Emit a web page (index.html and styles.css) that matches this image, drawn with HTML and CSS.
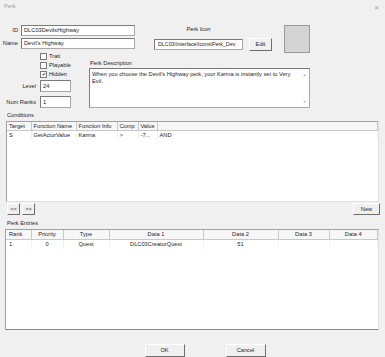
FILE: index.html
```html
<!DOCTYPE html>
<html>
<head>
	<title>Perk</title>
	<link rel="stylesheet" href="styles.css">
</head>
<body>
	<div class="dialog">
		<div class="titlebar">
			<span>Perk</span>
			<span class="close">&#x2715;</span>
		</div>

		<div class="top-row">
			<div class="fields">
				<div class="field">
					<label>ID</label>
					<div class="input wide">DLC03DevilsHighway</div>
				</div>
				<div class="field">
					<label>Name</label>
					<div class="input wide">Devil's Highway</div>
				</div>
			</div>
			<div class="icon-group">
				<div class="icon-label">Perk Icon</div>
				<div class="icon-line">
					<div class="input path">DLC03\Interface\Icons\Perk_Dev</div>
					<div class="btn edit">Edit</div>
				</div>
			</div>
			<div class="icon-preview"></div>
		</div>

		<div class="mid-row">
			<div class="flags">
				<div class="check"><span class="box"></span>Trait</div>
				<div class="check"><span class="box"></span>Playable</div>
				<div class="check"><span class="box checked">&#x2714;</span>Hidden</div>
				<div class="num level">
					<label>Level</label>
					<div class="input short">24</div>
				</div>
				<div class="num ranks">
					<label>Num Ranks</label>
					<div class="input short">1</div>
				</div>
			</div>
			<div class="description">
				<div class="caption">Perk Description</div>
				<div class="textarea">
					<div class="text">When you choose the Devil's Highway perk, your Karma is instantly set to Very<br>Evil.</div>
					<div class="vscroll"><span>&#x25B2;</span><span>&#x25BC;</span></div>
				</div>
			</div>
		</div>

		<div class="section-label conditions-label">Conditions</div>
		<div class="grid conditions">
			<table>
				<colgroup>
					<col style="width:24px">
					<col style="width:45px">
					<col style="width:41px">
					<col style="width:21px">
					<col style="width:19px">
					<col>
				</colgroup>
				<thead>
					<tr><th>Target</th><th>Function Name</th><th>Function Info</th><th>Comp</th><th>Value</th><th></th></tr>
				</thead>
				<tbody>
					<tr><td>S</td><td>GetActorValue</td><td>Karma</td><td>&gt;</td><td>-7...</td><td>AND</td></tr>
				</tbody>
			</table>
		</div>

		<div class="button-row">
			<div class="btn small">&lt;&lt;</div>
			<div class="btn small">&gt;&gt;</div>
			<div class="btn new">New</div>
		</div>

		<div class="section-label entries-label">Perk Entries</div>
		<div class="grid entries">
			<table>
				<colgroup>
					<col style="width:25px">
					<col style="width:32px">
					<col style="width:46px">
					<col style="width:94px">
					<col style="width:75px">
					<col style="width:51px">
					<col>
				</colgroup>
				<thead>
					<tr><th class="left">Rank</th><th>Priority</th><th>Type</th><th>Data 1</th><th>Data 2</th><th>Data 3</th><th>Data 4</th></tr>
				</thead>
				<tbody>
					<tr><td class="left">1</td><td>0</td><td>Quest</td><td>DLC03CreatorQuest</td><td>51</td><td></td><td></td></tr>
				</tbody>
			</table>
		</div>

		<div class="footer">
			<div class="btn action">OK</div>
			<div class="btn action">Cancel</div>
		</div>
	</div>
</body>
</html>
```

FILE: styles.css
```css
body {
	margin: 0;
	background-color: #f0f0f0;
}
.dialog {
	width: 385px;
	height: 357px;
	overflow: hidden;
	background-color: #f0f0f0;
	color: #262626;
	font-family: "Liberation Sans", Arial, sans-serif;
	font-size: 5.7px;
	line-height: 7px;
}
.titlebar {
	display: flex;
	justify-content: space-between;
	height: 20px;
	box-sizing: border-box;
	padding: 3px 6px 0 4px;
	color: #a0a0a0;
}
.close {
	font-size: 6px;
	padding-top: 2px;
}
.input {
	box-sizing: border-box;
	background-color: #fff;
	border: 1px solid #a8a8a8;
	border-top-color: #7a7a7a;
	border-left-color: #7a7a7a;
	padding: 1px 2px;
	white-space: nowrap;
	overflow: hidden;
}
.btn {
	box-sizing: border-box;
	display: flex;
	align-items: center;
	justify-content: center;
	background-color: #f0f0f0;
	border: 1px solid;
	border-color: #fff #6d6d6d #6d6d6d #fff;
}

/* top row: id, name, icon */
.top-row {
	display: flex;
	margin-top: 5px;
	height: 28px;
}
.fields {
	display: flex;
	flex-direction: column;
	gap: 2px;
	width: 135px;
}
.field {
	display: flex;
	align-items: center;
	height: 11px;
}
.field label {
	width: 18px;
	padding-right: 3px;
	text-align: right;
}
.input.wide {
	width: 114px;
	height: 11px;
}
.icon-group {
	margin-left: 19px;
}
.icon-label {
	width: 89px;
	height: 13px;
	padding-top: 1px;
	box-sizing: border-box;
	text-align: center;
}
.icon-line {
	display: flex;
	align-items: center;
}
.input.path {
	width: 89px;
	height: 11px;
	padding: 1px 1px 1px 3px;
	font-size: 5.4px;
	letter-spacing: -0.05px;
}
.btn.edit {
	width: 23px;
	height: 13px;
	margin-left: 6px;
}
.icon-preview {
	width: 26px;
	height: 28px;
	margin-left: 12px;
	box-sizing: border-box;
	background-color: #d4d4d4;
	border: 1px solid #9a9a9a;
}

/* flags and description */
.mid-row {
	display: flex;
	margin-top: -1px;
}
.flags {
	width: 89px;
}
.check {
	display: flex;
	align-items: center;
	height: 9px;
	padding-left: 40px;
}
.box {
	box-sizing: border-box;
	width: 7px;
	height: 7px;
	margin-right: 2px;
	background-color: #fff;
	border: 1px solid #7a7a7a;
	font-size: 5px;
	line-height: 5px;
	text-align: center;
	color: #333;
}
.num {
	display: flex;
	align-items: center;
}
.num label {
	width: 40px;
	padding-right: 4px;
	box-sizing: border-box;
	text-align: right;
}
.num.level {
	margin-top: 1px;
}
.num.ranks {
	margin-top: 4px;
}
.input.short {
	width: 31px;
	height: 12px;
	padding-top: 2px;
}
.description {
	width: 221px;
}
.caption {
	margin-top: 8px;
	padding-left: 1px;
}
.textarea {
	display: flex;
	height: 40px;
	margin-top: 1px;
	box-sizing: border-box;
	background-color: #fff;
	border: 1px solid #a8a8a8;
	border-top-color: #7a7a7a;
	border-left-color: #7a7a7a;
}
.textarea .text {
	flex: 1;
	padding: 2px 2px;
	white-space: nowrap;
}
.vscroll {
	display: flex;
	flex-direction: column;
	justify-content: space-between;
	width: 9px;
	padding: 3px 0 1px;
	color: #a6a6a6;
	font-size: 3.5px;
	text-align: center;
}

/* grids */
.section-label {
	padding-left: 7px;
}
.conditions-label {
	margin-top: 4px;
}
.grid {
	box-sizing: border-box;
	background-color: #fff;
	border: 1px solid #a0a0a0;
	border-right-color: #e0e0e0;
	border-bottom-color: #e0e0e0;
	margin-top: 2px;
}
.grid.conditions {
	width: 373px;
	height: 81px;
	margin-left: 6px;
}
.grid.entries {
	width: 374px;
	height: 101px;
	margin-left: 5px;
	border-bottom: 1px solid #8a8a8a;
}
table {
	width: 100%;
	table-layout: fixed;
	border-collapse: collapse;
}
th {
	height: 8px;
	padding: 0 2px;
	font-weight: normal;
	text-align: left;
	white-space: nowrap;
	overflow: hidden;
	background-color: #f7f7f7;
	border-right: 1px solid #c8c8c8;
	border-bottom: 1px solid #c8c8c8;
}
td {
	height: 9px;
	padding: 0 2px;
	white-space: nowrap;
	overflow: hidden;
	border-right: 1px solid #f3f3f3;
}
.entries th,
.entries td {
	text-align: center;
}
.entries th.left,
.entries td.left {
	text-align: left;
	padding-left: 3px;
}
.entries th {
	height: 9px;
}

/* buttons */
.button-row {
	display: flex;
	gap: 2px;
	height: 12px;
	margin-top: 1px;
	padding-left: 7px;
}
.btn.small {
	width: 13px;
	height: 12px;
}
.btn.new {
	width: 27px;
	height: 12px;
	margin-left: auto;
	margin-right: 5px;
}
.entries-label {
	margin-top: 5px;
}
.footer {
	display: flex;
	justify-content: center;
	gap: 41px;
	margin-top: 14px;
	padding-left: 25px;
}
.btn.action {
	width: 40px;
	height: 13px;
}
```
